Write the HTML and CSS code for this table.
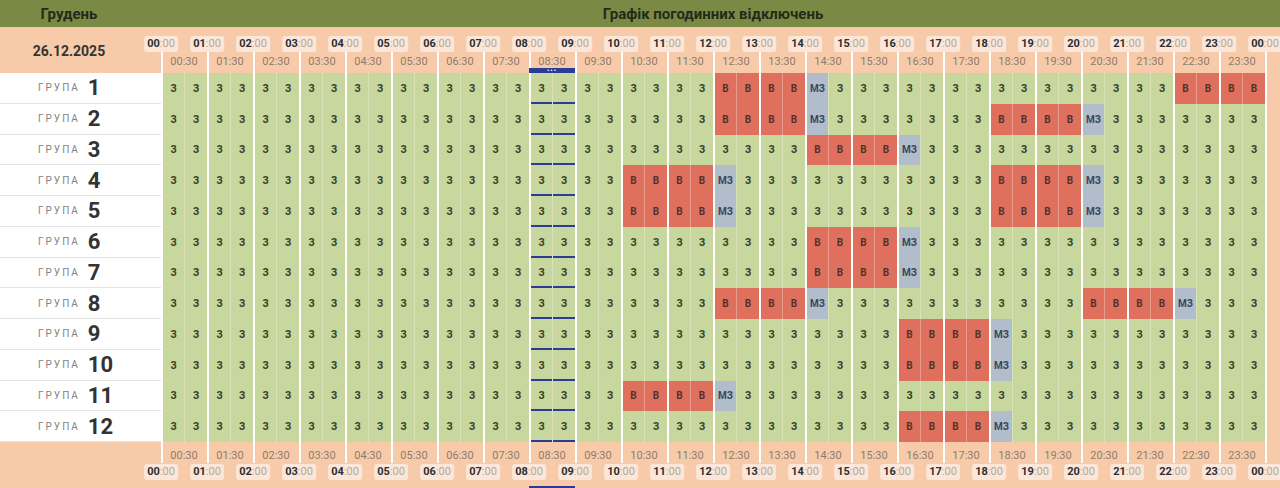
FILE: index.html
```html
<!DOCTYPE html>
<html lang="uk">
<head>
<meta charset="utf-8">
<title>Графік погодинних відключень</title>
<link rel="stylesheet" href="styles.css">
</head>
<body>
<div class="top">
  <div class="month">Грудень</div>
  <div class="title">Графік погодинних відключень</div>
  <div></div>
</div>

<div class="axis head">
  <div class="date">26.12.2025</div>
  <div class="hour"><div class="hl"><span class="tag"><b>00</b>:00</span></div><div class="low"><div class="hh">00:30</div><div class="mk"></div></div></div>
  <div class="hour"><div class="hl"><span class="tag"><b>01</b>:00</span></div><div class="low"><div class="hh">01:30</div><div class="mk"></div></div></div>
  <div class="hour"><div class="hl"><span class="tag"><b>02</b>:00</span></div><div class="low"><div class="hh">02:30</div><div class="mk"></div></div></div>
  <div class="hour"><div class="hl"><span class="tag"><b>03</b>:00</span></div><div class="low"><div class="hh">03:30</div><div class="mk"></div></div></div>
  <div class="hour"><div class="hl"><span class="tag"><b>04</b>:00</span></div><div class="low"><div class="hh">04:30</div><div class="mk"></div></div></div>
  <div class="hour"><div class="hl"><span class="tag"><b>05</b>:00</span></div><div class="low"><div class="hh">05:30</div><div class="mk"></div></div></div>
  <div class="hour"><div class="hl"><span class="tag"><b>06</b>:00</span></div><div class="low"><div class="hh">06:30</div><div class="mk"></div></div></div>
  <div class="hour"><div class="hl"><span class="tag"><b>07</b>:00</span></div><div class="low"><div class="hh">07:30</div><div class="mk"></div></div></div>
  <div class="hour"><div class="hl"><span class="tag"><b>08</b>:00</span></div><div class="low"><div class="hh">08:30</div><div class="mk now">•••</div></div></div>
  <div class="hour"><div class="hl"><span class="tag"><b>09</b>:00</span></div><div class="low"><div class="hh">09:30</div><div class="mk"></div></div></div>
  <div class="hour"><div class="hl"><span class="tag"><b>10</b>:00</span></div><div class="low"><div class="hh">10:30</div><div class="mk"></div></div></div>
  <div class="hour"><div class="hl"><span class="tag"><b>11</b>:00</span></div><div class="low"><div class="hh">11:30</div><div class="mk"></div></div></div>
  <div class="hour"><div class="hl"><span class="tag"><b>12</b>:00</span></div><div class="low"><div class="hh">12:30</div><div class="mk"></div></div></div>
  <div class="hour"><div class="hl"><span class="tag"><b>13</b>:00</span></div><div class="low"><div class="hh">13:30</div><div class="mk"></div></div></div>
  <div class="hour"><div class="hl"><span class="tag"><b>14</b>:00</span></div><div class="low"><div class="hh">14:30</div><div class="mk"></div></div></div>
  <div class="hour"><div class="hl"><span class="tag"><b>15</b>:00</span></div><div class="low"><div class="hh">15:30</div><div class="mk"></div></div></div>
  <div class="hour"><div class="hl"><span class="tag"><b>16</b>:00</span></div><div class="low"><div class="hh">16:30</div><div class="mk"></div></div></div>
  <div class="hour"><div class="hl"><span class="tag"><b>17</b>:00</span></div><div class="low"><div class="hh">17:30</div><div class="mk"></div></div></div>
  <div class="hour"><div class="hl"><span class="tag"><b>18</b>:00</span></div><div class="low"><div class="hh">18:30</div><div class="mk"></div></div></div>
  <div class="hour"><div class="hl"><span class="tag"><b>19</b>:00</span></div><div class="low"><div class="hh">19:30</div><div class="mk"></div></div></div>
  <div class="hour"><div class="hl"><span class="tag"><b>20</b>:00</span></div><div class="low"><div class="hh">20:30</div><div class="mk"></div></div></div>
  <div class="hour"><div class="hl"><span class="tag"><b>21</b>:00</span></div><div class="low"><div class="hh">21:30</div><div class="mk"></div></div></div>
  <div class="hour"><div class="hl"><span class="tag"><b>22</b>:00</span></div><div class="low"><div class="hh">22:30</div><div class="mk"></div></div></div>
  <div class="hour"><div class="hl"><span class="tag"><b>23</b>:00</span></div><div class="low"><div class="hh">23:30</div><div class="mk"></div></div></div>
  <div class="hour"><div class="hl"><span class="tag"><b>00</b>:00</span></div><div class="low"><div class="hh"></div><div class="mk"></div></div></div>
</div>

<div class="grid">
  <div class="row"><div class="lbl"><span>ГРУПА</span><b>1</b></div>
    <i>З</i><i>З</i><i>З</i><i>З</i><i>З</i><i>З</i><i>З</i><i>З</i>
    <i>З</i><i>З</i><i>З</i><i>З</i><i>З</i><i>З</i><i>З</i><i>З</i>
    <i class="n">З</i><i class="n">З</i><i>З</i><i>З</i><i>З</i><i>З</i><i>З</i><i>З</i>
    <i class="r">В</i><i class="r">В</i><i class="r">В</i><i class="r">В</i><i class="m">МЗ</i><i>З</i><i>З</i><i>З</i>
    <i>З</i><i>З</i><i>З</i><i>З</i><i>З</i><i>З</i><i>З</i><i>З</i>
    <i>З</i><i>З</i><i>З</i><i>З</i><i class="r">В</i><i class="r">В</i><i class="r">В</i><i class="r">В</i>
    <div class="fill"></div></div>

  <div class="row"><div class="lbl"><span>ГРУПА</span><b>2</b></div>
    <i>З</i><i>З</i><i>З</i><i>З</i><i>З</i><i>З</i><i>З</i><i>З</i>
    <i>З</i><i>З</i><i>З</i><i>З</i><i>З</i><i>З</i><i>З</i><i>З</i>
    <i class="n">З</i><i class="n">З</i><i>З</i><i>З</i><i>З</i><i>З</i><i>З</i><i>З</i>
    <i class="r">В</i><i class="r">В</i><i class="r">В</i><i class="r">В</i><i class="m">МЗ</i><i>З</i><i>З</i><i>З</i>
    <i>З</i><i>З</i><i>З</i><i>З</i><i class="r">В</i><i class="r">В</i><i class="r">В</i><i class="r">В</i>
    <i class="m">МЗ</i><i>З</i><i>З</i><i>З</i><i>З</i><i>З</i><i>З</i><i>З</i>
    <div class="fill"></div></div>

  <div class="row"><div class="lbl"><span>ГРУПА</span><b>3</b></div>
    <i>З</i><i>З</i><i>З</i><i>З</i><i>З</i><i>З</i><i>З</i><i>З</i>
    <i>З</i><i>З</i><i>З</i><i>З</i><i>З</i><i>З</i><i>З</i><i>З</i>
    <i class="n">З</i><i class="n">З</i><i>З</i><i>З</i><i>З</i><i>З</i><i>З</i><i>З</i>
    <i>З</i><i>З</i><i>З</i><i>З</i><i class="r">В</i><i class="r">В</i><i class="r">В</i><i class="r">В</i>
    <i class="m">МЗ</i><i>З</i><i>З</i><i>З</i><i>З</i><i>З</i><i>З</i><i>З</i>
    <i>З</i><i>З</i><i>З</i><i>З</i><i>З</i><i>З</i><i>З</i><i>З</i>
    <div class="fill"></div></div>

  <div class="row"><div class="lbl"><span>ГРУПА</span><b>4</b></div>
    <i>З</i><i>З</i><i>З</i><i>З</i><i>З</i><i>З</i><i>З</i><i>З</i>
    <i>З</i><i>З</i><i>З</i><i>З</i><i>З</i><i>З</i><i>З</i><i>З</i>
    <i class="n">З</i><i class="n">З</i><i>З</i><i>З</i><i class="r">В</i><i class="r">В</i><i class="r">В</i><i class="r">В</i>
    <i class="m">МЗ</i><i>З</i><i>З</i><i>З</i><i>З</i><i>З</i><i>З</i><i>З</i>
    <i>З</i><i>З</i><i>З</i><i>З</i><i class="r">В</i><i class="r">В</i><i class="r">В</i><i class="r">В</i>
    <i class="m">МЗ</i><i>З</i><i>З</i><i>З</i><i>З</i><i>З</i><i>З</i><i>З</i>
    <div class="fill"></div></div>

  <div class="row"><div class="lbl"><span>ГРУПА</span><b>5</b></div>
    <i>З</i><i>З</i><i>З</i><i>З</i><i>З</i><i>З</i><i>З</i><i>З</i>
    <i>З</i><i>З</i><i>З</i><i>З</i><i>З</i><i>З</i><i>З</i><i>З</i>
    <i class="n">З</i><i class="n">З</i><i>З</i><i>З</i><i class="r">В</i><i class="r">В</i><i class="r">В</i><i class="r">В</i>
    <i class="m">МЗ</i><i>З</i><i>З</i><i>З</i><i>З</i><i>З</i><i>З</i><i>З</i>
    <i>З</i><i>З</i><i>З</i><i>З</i><i class="r">В</i><i class="r">В</i><i class="r">В</i><i class="r">В</i>
    <i class="m">МЗ</i><i>З</i><i>З</i><i>З</i><i>З</i><i>З</i><i>З</i><i>З</i>
    <div class="fill"></div></div>

  <div class="row"><div class="lbl"><span>ГРУПА</span><b>6</b></div>
    <i>З</i><i>З</i><i>З</i><i>З</i><i>З</i><i>З</i><i>З</i><i>З</i>
    <i>З</i><i>З</i><i>З</i><i>З</i><i>З</i><i>З</i><i>З</i><i>З</i>
    <i class="n">З</i><i class="n">З</i><i>З</i><i>З</i><i>З</i><i>З</i><i>З</i><i>З</i>
    <i>З</i><i>З</i><i>З</i><i>З</i><i class="r">В</i><i class="r">В</i><i class="r">В</i><i class="r">В</i>
    <i class="m">МЗ</i><i>З</i><i>З</i><i>З</i><i>З</i><i>З</i><i>З</i><i>З</i>
    <i>З</i><i>З</i><i>З</i><i>З</i><i>З</i><i>З</i><i>З</i><i>З</i>
    <div class="fill"></div></div>

  <div class="row"><div class="lbl"><span>ГРУПА</span><b>7</b></div>
    <i>З</i><i>З</i><i>З</i><i>З</i><i>З</i><i>З</i><i>З</i><i>З</i>
    <i>З</i><i>З</i><i>З</i><i>З</i><i>З</i><i>З</i><i>З</i><i>З</i>
    <i class="n">З</i><i class="n">З</i><i>З</i><i>З</i><i>З</i><i>З</i><i>З</i><i>З</i>
    <i>З</i><i>З</i><i>З</i><i>З</i><i class="r">В</i><i class="r">В</i><i class="r">В</i><i class="r">В</i>
    <i class="m">МЗ</i><i>З</i><i>З</i><i>З</i><i>З</i><i>З</i><i>З</i><i>З</i>
    <i>З</i><i>З</i><i>З</i><i>З</i><i>З</i><i>З</i><i>З</i><i>З</i>
    <div class="fill"></div></div>

  <div class="row"><div class="lbl"><span>ГРУПА</span><b>8</b></div>
    <i>З</i><i>З</i><i>З</i><i>З</i><i>З</i><i>З</i><i>З</i><i>З</i>
    <i>З</i><i>З</i><i>З</i><i>З</i><i>З</i><i>З</i><i>З</i><i>З</i>
    <i class="n">З</i><i class="n">З</i><i>З</i><i>З</i><i>З</i><i>З</i><i>З</i><i>З</i>
    <i class="r">В</i><i class="r">В</i><i class="r">В</i><i class="r">В</i><i class="m">МЗ</i><i>З</i><i>З</i><i>З</i>
    <i>З</i><i>З</i><i>З</i><i>З</i><i>З</i><i>З</i><i>З</i><i>З</i>
    <i class="r">В</i><i class="r">В</i><i class="r">В</i><i class="r">В</i><i class="m">МЗ</i><i>З</i><i>З</i><i>З</i>
    <div class="fill"></div></div>

  <div class="row"><div class="lbl"><span>ГРУПА</span><b>9</b></div>
    <i>З</i><i>З</i><i>З</i><i>З</i><i>З</i><i>З</i><i>З</i><i>З</i>
    <i>З</i><i>З</i><i>З</i><i>З</i><i>З</i><i>З</i><i>З</i><i>З</i>
    <i class="n">З</i><i class="n">З</i><i>З</i><i>З</i><i>З</i><i>З</i><i>З</i><i>З</i>
    <i>З</i><i>З</i><i>З</i><i>З</i><i>З</i><i>З</i><i>З</i><i>З</i>
    <i class="r">В</i><i class="r">В</i><i class="r">В</i><i class="r">В</i><i class="m">МЗ</i><i>З</i><i>З</i><i>З</i>
    <i>З</i><i>З</i><i>З</i><i>З</i><i>З</i><i>З</i><i>З</i><i>З</i>
    <div class="fill"></div></div>

  <div class="row"><div class="lbl"><span>ГРУПА</span><b>10</b></div>
    <i>З</i><i>З</i><i>З</i><i>З</i><i>З</i><i>З</i><i>З</i><i>З</i>
    <i>З</i><i>З</i><i>З</i><i>З</i><i>З</i><i>З</i><i>З</i><i>З</i>
    <i class="n">З</i><i class="n">З</i><i>З</i><i>З</i><i>З</i><i>З</i><i>З</i><i>З</i>
    <i>З</i><i>З</i><i>З</i><i>З</i><i>З</i><i>З</i><i>З</i><i>З</i>
    <i class="r">В</i><i class="r">В</i><i class="r">В</i><i class="r">В</i><i class="m">МЗ</i><i>З</i><i>З</i><i>З</i>
    <i>З</i><i>З</i><i>З</i><i>З</i><i>З</i><i>З</i><i>З</i><i>З</i>
    <div class="fill"></div></div>

  <div class="row"><div class="lbl"><span>ГРУПА</span><b>11</b></div>
    <i>З</i><i>З</i><i>З</i><i>З</i><i>З</i><i>З</i><i>З</i><i>З</i>
    <i>З</i><i>З</i><i>З</i><i>З</i><i>З</i><i>З</i><i>З</i><i>З</i>
    <i class="n">З</i><i class="n">З</i><i>З</i><i>З</i><i class="r">В</i><i class="r">В</i><i class="r">В</i><i class="r">В</i>
    <i class="m">МЗ</i><i>З</i><i>З</i><i>З</i><i>З</i><i>З</i><i>З</i><i>З</i>
    <i>З</i><i>З</i><i>З</i><i>З</i><i>З</i><i>З</i><i>З</i><i>З</i>
    <i>З</i><i>З</i><i>З</i><i>З</i><i>З</i><i>З</i><i>З</i><i>З</i>
    <div class="fill"></div></div>

  <div class="row"><div class="lbl"><span>ГРУПА</span><b>12</b></div>
    <i>З</i><i>З</i><i>З</i><i>З</i><i>З</i><i>З</i><i>З</i><i>З</i>
    <i>З</i><i>З</i><i>З</i><i>З</i><i>З</i><i>З</i><i>З</i><i>З</i>
    <i class="n">З</i><i class="n">З</i><i>З</i><i>З</i><i>З</i><i>З</i><i>З</i><i>З</i>
    <i>З</i><i>З</i><i>З</i><i>З</i><i>З</i><i>З</i><i>З</i><i>З</i>
    <i class="r">В</i><i class="r">В</i><i class="r">В</i><i class="r">В</i><i class="m">МЗ</i><i>З</i><i>З</i><i>З</i>
    <i>З</i><i>З</i><i>З</i><i>З</i><i>З</i><i>З</i><i>З</i><i>З</i>
    <div class="fill"></div></div>
</div>

<div class="axis foot">
  <div class="date"></div>
  <div class="hour"><div class="low"><div class="hh">00:30</div></div><div class="hl"><span class="tag"><b>00</b>:00</span></div><div class="mk"></div></div>
  <div class="hour"><div class="low"><div class="hh">01:30</div></div><div class="hl"><span class="tag"><b>01</b>:00</span></div><div class="mk"></div></div>
  <div class="hour"><div class="low"><div class="hh">02:30</div></div><div class="hl"><span class="tag"><b>02</b>:00</span></div><div class="mk"></div></div>
  <div class="hour"><div class="low"><div class="hh">03:30</div></div><div class="hl"><span class="tag"><b>03</b>:00</span></div><div class="mk"></div></div>
  <div class="hour"><div class="low"><div class="hh">04:30</div></div><div class="hl"><span class="tag"><b>04</b>:00</span></div><div class="mk"></div></div>
  <div class="hour"><div class="low"><div class="hh">05:30</div></div><div class="hl"><span class="tag"><b>05</b>:00</span></div><div class="mk"></div></div>
  <div class="hour"><div class="low"><div class="hh">06:30</div></div><div class="hl"><span class="tag"><b>06</b>:00</span></div><div class="mk"></div></div>
  <div class="hour"><div class="low"><div class="hh">07:30</div></div><div class="hl"><span class="tag"><b>07</b>:00</span></div><div class="mk"></div></div>
  <div class="hour"><div class="low"><div class="hh">08:30</div></div><div class="hl"><span class="tag"><b>08</b>:00</span></div><div class="mk now"></div></div>
  <div class="hour"><div class="low"><div class="hh">09:30</div></div><div class="hl"><span class="tag"><b>09</b>:00</span></div><div class="mk"></div></div>
  <div class="hour"><div class="low"><div class="hh">10:30</div></div><div class="hl"><span class="tag"><b>10</b>:00</span></div><div class="mk"></div></div>
  <div class="hour"><div class="low"><div class="hh">11:30</div></div><div class="hl"><span class="tag"><b>11</b>:00</span></div><div class="mk"></div></div>
  <div class="hour"><div class="low"><div class="hh">12:30</div></div><div class="hl"><span class="tag"><b>12</b>:00</span></div><div class="mk"></div></div>
  <div class="hour"><div class="low"><div class="hh">13:30</div></div><div class="hl"><span class="tag"><b>13</b>:00</span></div><div class="mk"></div></div>
  <div class="hour"><div class="low"><div class="hh">14:30</div></div><div class="hl"><span class="tag"><b>14</b>:00</span></div><div class="mk"></div></div>
  <div class="hour"><div class="low"><div class="hh">15:30</div></div><div class="hl"><span class="tag"><b>15</b>:00</span></div><div class="mk"></div></div>
  <div class="hour"><div class="low"><div class="hh">16:30</div></div><div class="hl"><span class="tag"><b>16</b>:00</span></div><div class="mk"></div></div>
  <div class="hour"><div class="low"><div class="hh">17:30</div></div><div class="hl"><span class="tag"><b>17</b>:00</span></div><div class="mk"></div></div>
  <div class="hour"><div class="low"><div class="hh">18:30</div></div><div class="hl"><span class="tag"><b>18</b>:00</span></div><div class="mk"></div></div>
  <div class="hour"><div class="low"><div class="hh">19:30</div></div><div class="hl"><span class="tag"><b>19</b>:00</span></div><div class="mk"></div></div>
  <div class="hour"><div class="low"><div class="hh">20:30</div></div><div class="hl"><span class="tag"><b>20</b>:00</span></div><div class="mk"></div></div>
  <div class="hour"><div class="low"><div class="hh">21:30</div></div><div class="hl"><span class="tag"><b>21</b>:00</span></div><div class="mk"></div></div>
  <div class="hour"><div class="low"><div class="hh">22:30</div></div><div class="hl"><span class="tag"><b>22</b>:00</span></div><div class="mk"></div></div>
  <div class="hour"><div class="low"><div class="hh">23:30</div></div><div class="hl"><span class="tag"><b>23</b>:00</span></div><div class="mk"></div></div>
  <div class="hour"><div class="low"><div class="hh"></div></div><div class="hl"><span class="tag"><b>00</b>:00</span></div><div class="mk"></div></div>
</div>
</body>
</html>
```

FILE: styles.css
```css
* { box-sizing: border-box; margin: 0; padding: 0; }
html, body { width: 1280px; height: 488px; overflow: hidden; }
body {
  font-family: Roboto, "Noto Sans", "Liberation Sans", sans-serif;
  background: #f7cba9;
  color: #333;
}

/* top bar */
.top {
  display: grid;
  grid-template-columns: 161px 1104px 1fr;
  height: 27px;
  background: #7a8a45;
  color: #232b1a;
  font-weight: 700;
  font-size: 15px;
  align-items: center;
}
.top .month { text-align: center; padding-right: 23px; }
.top .title { text-align: center; }

/* time axes */
.axis {
  display: grid;
  grid-template-columns: 161px repeat(24, 46px) 1fr;
  height: 46px;
  background: #f7cba9;
}
.date {
  display: flex;
  align-items: center;
  justify-content: center;
  padding-right: 23px;
  font-weight: 700;
  font-size: 14px;
  color: #333;
}
.hour { display: flex; flex-direction: column; min-width: 0; }
.hl { height: 25px; display: flex; align-items: flex-end; }
.tag {
  transform: translateX(-50%);
  height: 16px;
  line-height: 16px;
  padding: 0 3px;
  background: #fbe7d9;
  border-radius: 3px;
  font-size: 11px;
  color: #b3a79d;
  white-space: nowrap;
}
.tag b { color: #2e2e2e; font-weight: 700; }
.low {
  flex: 1;
  border-left: 2px solid #fff;
  display: flex;
  flex-direction: column;
}
.hh {
  flex: 1;
  display: flex;
  align-items: center;
  justify-content: center;
  padding-top: 3px;
  margin-left: -2px;
  font-size: 11px;
  color: #8e7b6b;
  white-space: nowrap;
}
.mk { height: 7px; }
.mk.now {
  margin-left: -2px;
  background: #2b3c97;
  color: #fff;
  font-size: 7px;
  line-height: 7px;
  letter-spacing: 1px;
  text-align: center;
}

/* footer axis */
.foot .low { flex: none; height: 21px; }
.foot .hh { padding-top: 5px; }
.foot .hl { flex: 1; height: auto; align-items: flex-start; padding-top: 1px; }
.foot .mk { height: 2px; }
.foot .mk.now { margin-left: 0; }

/* schedule grid */
.row {
  display: grid;
  grid-template-columns: 161px repeat(48, 23px) 15px;
  height: 30.75px;
}
.lbl {
  background: #fff;
  border-bottom: 1px solid #e4e4e4;
  display: flex;
  align-items: center;
  padding-left: 38px;
}
.lbl span {
  font-size: 10px;
  letter-spacing: 2px;
  color: #828282;
  margin-right: 8px;
}
.lbl b { font-size: 22px; font-weight: 700; color: #333; }

.row > i {
  font-style: normal;
  display: flex;
  align-items: center;
  justify-content: center;
  font-size: 10px;
  font-weight: 700;
  color: #3a3d2c;
  background: #c7d79d;
  border-left: 1px solid rgba(255, 255, 255, 0.3);
}
.row > :nth-child(even) { border-left: 2px solid #fff; }
.row > i.r { background: #e0705e; color: #54302a; }
.row > i.m { background: #b1bdcb; color: #3a475a; }
.row > i.n { box-shadow: inset 0 -2px #2b3c97; }
.fill { background: #f7cba9; }
```
